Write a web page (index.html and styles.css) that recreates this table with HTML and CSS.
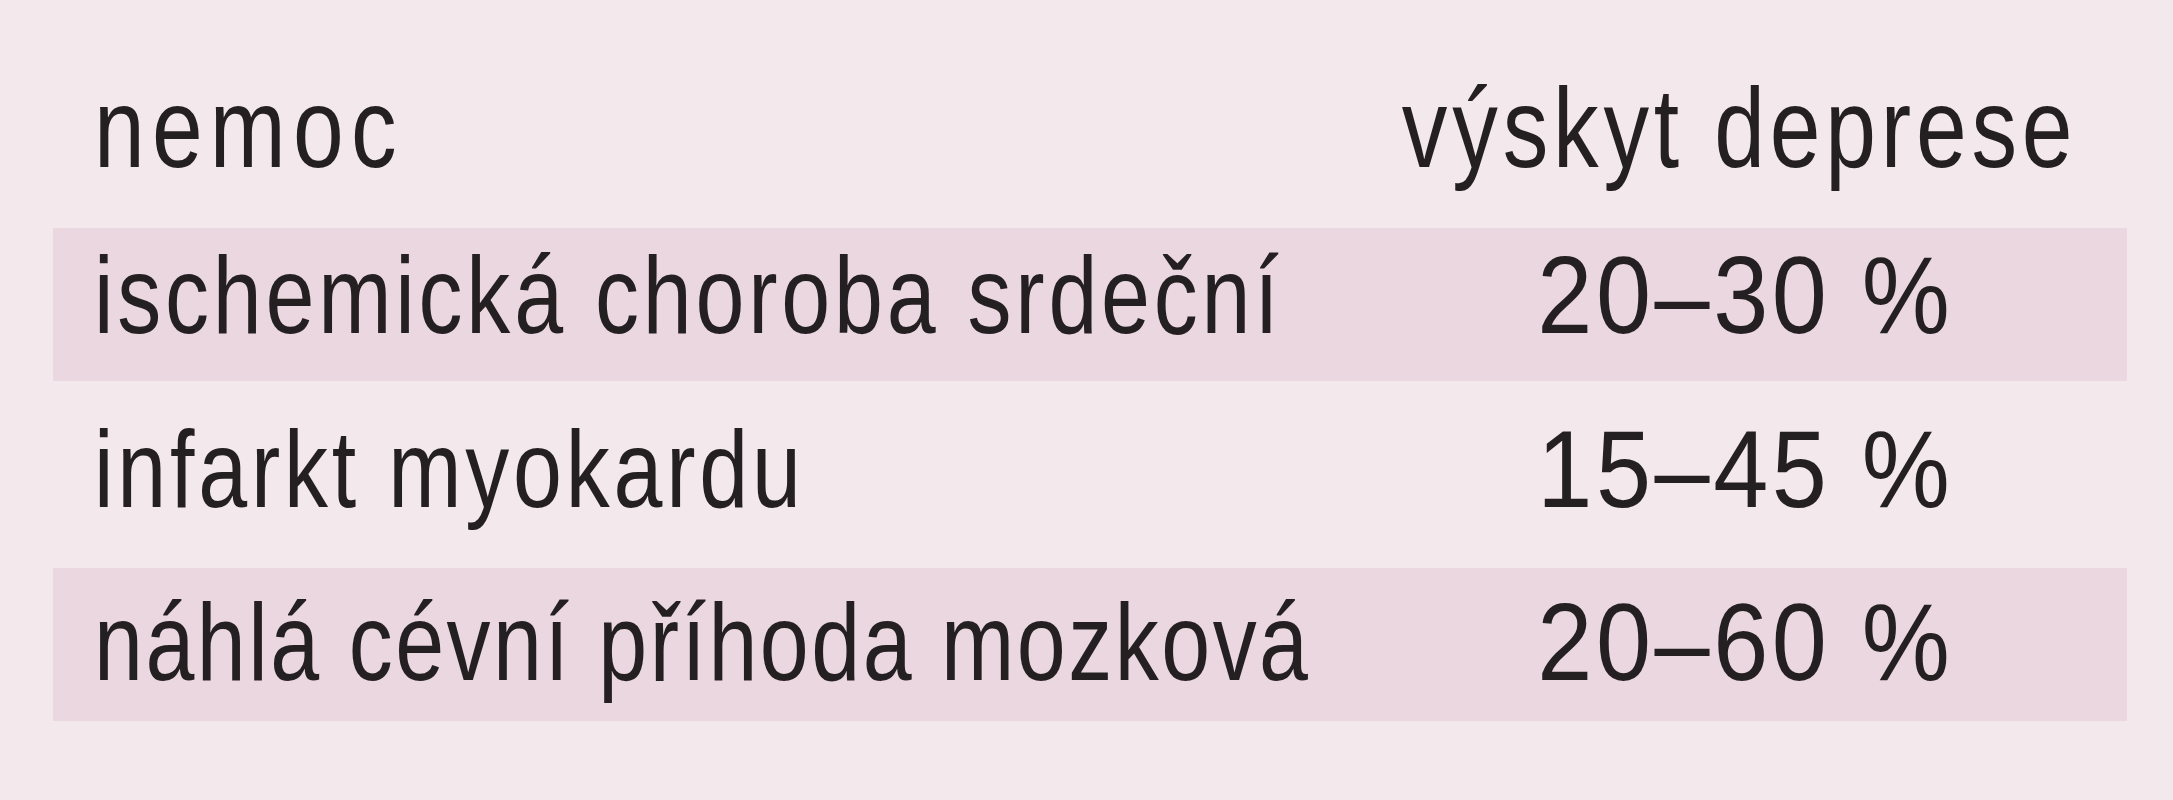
FILE: index.html
```html
<!DOCTYPE html>
<html lang="cs">
<head>
<meta charset="utf-8">
<title>Výskyt deprese</title>
<link rel="stylesheet" href="styles.css">
</head>
<body>
<table class="tbl">
  <colgroup>
    <col class="c-name">
    <col class="c-val">
  </colgroup>
  <thead>
    <tr class="row head">
      <th class="name"><span class="t th-t th-l">nemoc</span></th>
      <th class="val"><span class="t th-t th-r">výskyt deprese</span></th>
    </tr>
  </thead>
  <tbody>
    <tr class="row r1 striped">
      <td class="name"><span class="t wide">ischemická choroba srdeční</span></td>
      <td class="val num"><span class="t n">20–30 %</span></td>
    </tr>
    <tr class="row r2">
      <td class="name"><span class="t wide">infarkt myokardu</span></td>
      <td class="val num"><span class="t n">15–45 %</span></td>
    </tr>
    <tr class="row r3 striped">
      <td class="name"><span class="t tight">náhlá cévní příhoda mozková</span></td>
      <td class="val num"><span class="t n">20–60 %</span></td>
    </tr>
  </tbody>
</table>
</body>
</html>
```
FILE: styles.css
```css
html, body {
  margin: 0;
  padding: 0;
  background: #f3e8ec;
}
body {
  width: 2173px;
  height: 800px;
  overflow: hidden;
  font-family: "Liberation Sans", Arial, sans-serif;
  color: #241f21;
}
.tbl {
  margin-left: 53px;
  width: 2074px;
  table-layout: fixed;
  border-collapse: collapse;
  border-spacing: 0;
}
.c-name { width: 1100px; }
.c-val { width: 974px; }

.tbl th, .tbl td {
  font-weight: normal;
  font-size: 110px;
  line-height: 112px;
  padding: 0;
  white-space: nowrap;
  vertical-align: top;
}
.t {
  display: inline-block;
  letter-spacing: 4px;
  transform: scaleX(0.8);
}
.wide { letter-spacing: 4.7px; }
.tight { letter-spacing: 3.1px; }
.name .t { transform-origin: left center; }
.val .t { transform-origin: right center; }
.th-t { font-size: 114px; }
.th-l { letter-spacing: 9px; }
.th-r { letter-spacing: 6px; }
.n {
  letter-spacing: 4px;
  transform: scaleX(0.9);
}

.name {
  text-align: left;
  padding-left: 41px !important;
}
.val {
  text-align: right;
}
.head .val { padding-right: 50px !important; }
.num { padding-right: 174px !important; }
.striped { background: #ead7e0; }

.head th { padding-top: 72px; padding-bottom: 43px; }
.r1 td { padding-top: 11px; padding-bottom: 30px; }
.r2 td { padding-top: 32px; padding-bottom: 43px; }
.r3 td { padding-top: 18px; padding-bottom: 23px; }
```
